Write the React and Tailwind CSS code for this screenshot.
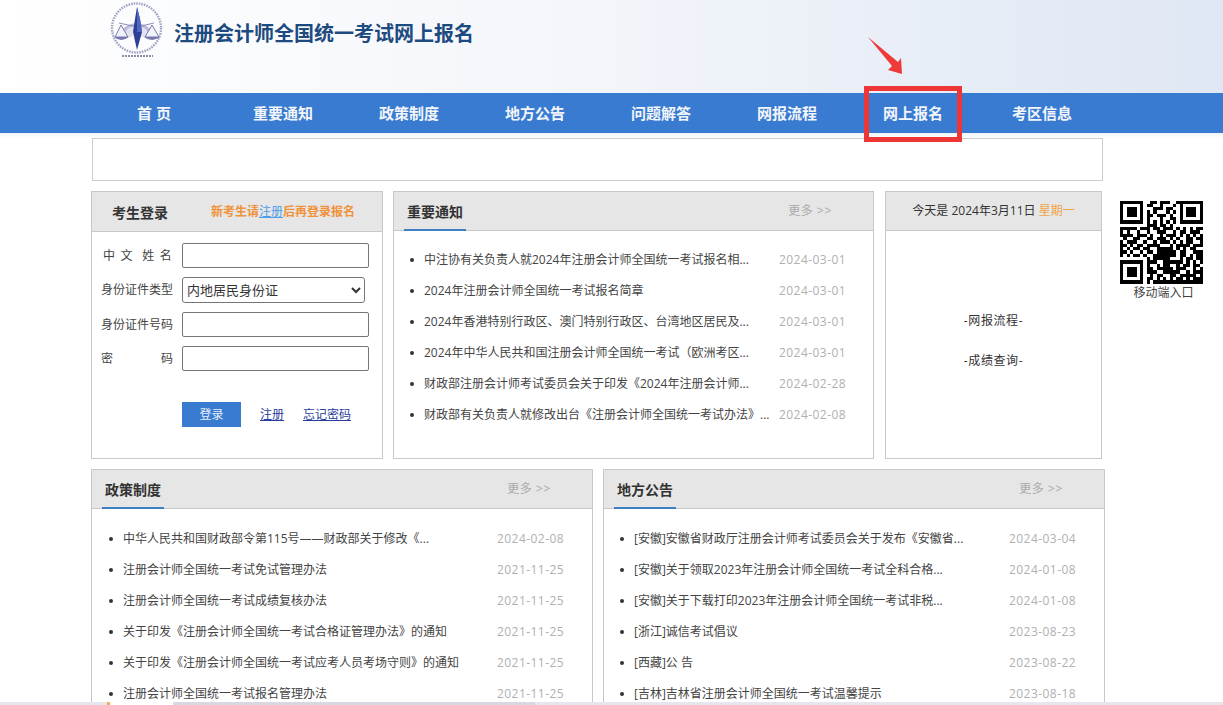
const notices = [
  ["中注协有关负责人就2024年注册会计师全国统一考试报名相...", "2024-03-01"],
  ["2024年注册会计师全国统一考试报名简章", "2024-03-01"],
  ["2024年香港特别行政区、澳门特别行政区、台湾地区居民及...", "2024-03-01"],
  ["2024年中华人民共和国注册会计师全国统一考试（欧洲考区...", "2024-03-01"],
  ["财政部注册会计师考试委员会关于印发《2024年注册会计师...", "2024-02-28"],
  ["财政部有关负责人就修改出台《注册会计师全国统一考试办法》...", "2024-02-08"],
];
const policies = [
  ["中华人民共和国财政部令第115号——财政部关于修改《...", "2024-02-08"],
  ["注册会计师全国统一考试免试管理办法", "2021-11-25"],
  ["注册会计师全国统一考试成绩复核办法", "2021-11-25"],
  ["关于印发《注册会计师全国统一考试合格证管理办法》的通知", "2021-11-25"],
  ["关于印发《注册会计师全国统一考试应考人员考场守则》的通知", "2021-11-25"],
  ["注册会计师全国统一考试报名管理办法", "2021-11-25"],
];
const locals = [
  ["[安徽]安徽省财政厅注册会计师考试委员会关于发布《安徽省...", "2024-03-04"],
  ["[安徽]关于领取2023年注册会计师全国统一考试全科合格...", "2024-01-08"],
  ["[安徽]关于下载打印2023年注册会计师全国统一考试非税...", "2024-01-08"],
  ["[浙江]诚信考试倡议", "2023-08-23"],
  ["[西藏]公 告", "2023-08-22"],
  ["[吉林]吉林省注册会计师全国统一考试温馨提示", "2023-08-18"],
];
const nav = ["重要通知", "政策制度", "地方公告", "问题解答", "网报流程", "网上报名"];

const qr = [
  "1111111" + "00110111001" + "1111111",
  "1000001" + "01100100010" + "1000001",
  "1011101" + "00011101100" + "1011101",
  "1011101" + "01010001010" + "1011101",
  "1011101" + "01101110100" + "1011101",
  "1000001" + "01000100110" + "1000001",
  "1111111" + "01010101010" + "1111111",
  "0000000" + "01110110100" + "0000000",
  "1111101" + "11011011101" + "0101011",
  "1010010" + "01001110010" + "1101110",
  "1111011" + "10100101110" + "1010101",
  "0100110" + "01101110101" + "0011011",
  "1011100" + "10010111010" + "1011001",
  "1101011" + "01111000101" + "1110111",
  "1010110" + "11001111101" + "0101100",
  "1101001" + "01101111110" + "1100111",
  "1010110" + "10011111110" + "1101011",
  "0000000" + "01011111000" + "1011011",
  "1111111" + "01110011111" + "1010101",
  "1000001" + "01001011001" + "0110110",
  "1011101" + "01101111101" + "1100101",
  "1011101" + "01110011111" + "0010111",
  "1011101" + "00101100110" + "1111101",
  "1000001" + "01101010101" + "1010111",
  "1111111" + "01011111111" + "1111111",
];

function QR() {
  return (
    <svg width="83" height="84" viewBox="0 0 25 25" shapeRendering="crispEdges">
      <rect width="25" height="25" fill="#fff" />
      {qr.flatMap((row, y) =>
        row.split("").map((c, x) => (c === "1" ? <rect key={x + "-" + y} x={x} y={y} width="1" height="1" fill="#000" /> : null))
      )}
    </svg>
  );
}

function Logo() {
  return (
    <svg width="58" height="62" viewBox="0 0 58 62" className="shrink-0 blur-[0.4px]">
      <circle cx="29.5" cy="28" r="24.5" fill="none" stroke="#a3a3c4" strokeWidth="2.4" strokeDasharray="1.6 1" />
      <path d="M11 37 A19.5 20 0 0 1 48 37 L43 37 A14 15 0 0 0 16 37 Z" fill="#bcbcdc" />
      <path d="M16 37 A14 15 0 0 1 43 37 L34 37 L30 18 L25 37 Z" fill="#e2e2f0" />
      <path d="M12 23 L30 27 L47 23" fill="none" stroke="#8080b4" strokeWidth="0.9" />
      <path d="M14 25 L8 37 L21 37 Z M45 25 L38 37 L52 37 Z" fill="#f2f3fa" stroke="#6a6aa4" strokeWidth="0.9" />
      <path d="M7 37 Q14 43 22 37 Z M37 37 Q45 43 53 37 Z" fill="#7878ae" />
      <path d="M30 7 L33 19 L35 32 L30 50 L26 32 L28 19 Z" fill="#2f3f96" />
      <path d="M30 7 L33 19 L35 32 L30 32 Z" fill="#5066bc" />
      <line x1="15" y1="56" x2="46" y2="56" stroke="#8a8aa8" strokeWidth="2" strokeDasharray="2 1" />
    </svg>
  );
}

function Head({ title, more = "更多 >>" }) {
  return (
    <div className="flex h-[39px] items-stretch border-b border-[#c8c8c8] bg-[#e6e6e6]">
      <div className="ml-[10px] -mb-px flex items-center border-b-2 border-[#3f80c4] px-[3px] pt-[1px] text-[14px] font-bold text-[#333]">
        {title}
      </div>
      <a className="ml-auto mr-[41px] flex items-center text-[12px] tracking-[0.6px] text-[#aaa]">{more}</a>
    </div>
  );
}

function Rows({ items, pad, width, top }) {
  return (
    <ul className={top}>
      {items.map(([t, d]) => (
        <li key={t} className={"flex h-[31px] items-center gap-[10px] " + pad}>
          <span className="h-1 w-1 shrink-0 rounded-full bg-[#333]" />
          <span className={"whitespace-nowrap text-[12px] text-[#444] " + width}>{t}</span>
          <span className="text-[12px] tracking-[0.45px] text-[#b0b0b0]">{d}</span>
        </li>
      ))}
    </ul>
  );
}

function Field({ label, className = "", select }) {
  return (
    <div className="flex items-center">
      <div className={"mr-[9px] ml-[9px] w-[72px] text-right text-[12px] text-[#444] " + className}>{label}</div>
      {select ? (
        <select className="h-[26px] w-[183px] rounded-[3px] border border-[#767676] bg-white text-[13px] text-[#333]">
          <option>内地居民身份证</option>
        </select>
      ) : (
        <input className="h-[25px] w-[187px] rounded-[2px] border border-[#767676] bg-white" />
      )}
    </div>
  );
}

export default function App() {
  return (
    <div className="relative h-[705px] w-[1223px] overflow-hidden bg-white font-['Open_Sans','Noto_Sans_CJK_SC',sans-serif]">
      <header className="flex h-[93px] items-start bg-gradient-to-r from-white via-[#f2f5fa] to-[#dfe7f4] pl-[107px]">
        <Logo />
        <h1 className="ml-[9px] mt-[20px] text-[20px] font-bold leading-[28px] text-[#1d4a7f]">注册会计师全国统一考试网上报名</h1>
      </header>

      <nav className="flex h-[40px] items-center bg-[#387bd1] pl-[91px] text-[15px] font-bold text-[#f2f5fa]">
        <a className="mr-[3px] w-[126px] text-center">首 页</a>
        {nav.map((n) => (
          <a key={n} className="w-[126px] text-center">{n}</a>
        ))}
        <a className="ml-[3px] w-[126px] text-center">考区信息</a>
      </nav>

      <div className="bg-gradient-to-b from-[#eef2f8] to-white to-[5px] pt-[5px]">
        <div className="ml-[92px] h-[43px] w-[1011px] border border-[#ccc] bg-white" />
      </div>

      <div className="ml-[91px] mt-[10px] flex items-start">
        <section className="h-[268px] w-[292px] border border-[#c8c8c8]">
          <div className="flex h-[40px] items-center border-b border-[#c8c8c8] bg-[#e6e6e6] pl-[20px] pt-[1px]">
            <span className="text-[14px] font-bold text-[#333]">考生登录</span>
            <span className="ml-[43px] text-[12px] font-bold text-[#f0923a]">
              新考生请<a className="font-normal text-[#4d9ce8] underline">注册</a>后再登录报名
            </span>
          </div>
          <div className="flex flex-col gap-[9px] pt-[11px]">
            <Field label="中 文&nbsp;&nbsp;姓 名" className="tracking-[1.2px]" />
            <Field label="身份证件类型" select />
            <Field label="身份证件号码" />
            <div className="flex items-center">
              <div className="ml-[9px] mr-[9px] flex w-[72px] justify-between text-[12px] text-[#444]">
                <span>密</span>
                <span>码</span>
              </div>
              <input className="h-[25px] w-[187px] rounded-[2px] border border-[#767676] bg-white" />
            </div>
          </div>
          <div className="ml-[90px] mt-[31px] flex items-center">
            <button className="h-[25px] w-[59px] bg-[#387bd1] text-[12px] text-[#e6eef8]">登录</button>
            <a className="ml-[19px] text-[12px] text-[#2a3c9c] underline">注册</a>
            <a className="ml-[19px] text-[12px] text-[#2a3c9c] underline">忘记密码</a>
          </div>
        </section>

        <section className="ml-[10px] h-[268px] w-[481px] border border-[#c8c8c8]">
          <Head title="重要通知" />
          <Rows items={notices} pad="pl-[16px]" width="w-[345px]" top="pt-[13px]" />
        </section>

        <section className="ml-[11px] h-[268px] w-[217px] border border-[#c8c8c8]">
          <div className="flex h-[39px] items-center justify-center border-b border-[#c8c8c8] bg-[#e6e6e6] text-[12px] text-[#333]">
            今天是 2024年3月11日&nbsp;<span className="text-[#f0a24a]">星期一</span>
          </div>
          <div className="flex flex-col items-center gap-[22px] pt-[81px] text-[12px] leading-[18px] text-[#333]">
            <a className="tracking-[0.6px]">-网报流程-</a>
            <a className="tracking-[0.6px]">-成绩查询-</a>
          </div>
        </section>

        <aside className="ml-[18px] mt-[9px] flex w-[83px] flex-col items-center">
          <QR />
          <span className="ml-[4px] mt-[1px] whitespace-nowrap text-[12px] leading-[16px] text-[#444]">移动端入口</span>
        </aside>
      </div>

      <div className="ml-[91px] mt-[10px] flex gap-[10px]">
        <section className="h-[240px] w-[502px] border border-[#c8c8c8]">
          <Head title="政策制度" />
          <Rows items={policies} pad="pl-[17px]" width="w-[364px]" top="pt-[14px]" />
        </section>
        <section className="h-[240px] w-[502px] border border-[#c8c8c8]">
          <Head title="地方公告" />
          <Rows items={locals} pad="pl-[16px]" width="w-[365px]" top="pt-[14px]" />
        </section>
      </div>

      {/* annotation over the nav */}
      <div className="absolute left-[864px] top-[86px] h-[56px] w-[98px] border-[5px] border-[#ee3636]" />
      <svg className="absolute left-[860px] top-[30px]" width="50" height="50" viewBox="0 0 50 50">
        <polygon points="8,7 38,32 41,28 42,44 28,40 32,36" fill="#ee3a38" />
      </svg>

      {/* browser strip at the very bottom */}
      <div className="absolute bottom-0 left-0 flex h-[3px] w-full bg-[#e6e6ee]">
        <div className="w-[107px]" />
        <div className="h-full w-[3px] bg-[#f0b050]" />
        <div className="h-full w-[63px] bg-white" />
        <div className="h-full w-[362px] bg-[#d8d8e2]" />
      </div>
    </div>
  );
}
